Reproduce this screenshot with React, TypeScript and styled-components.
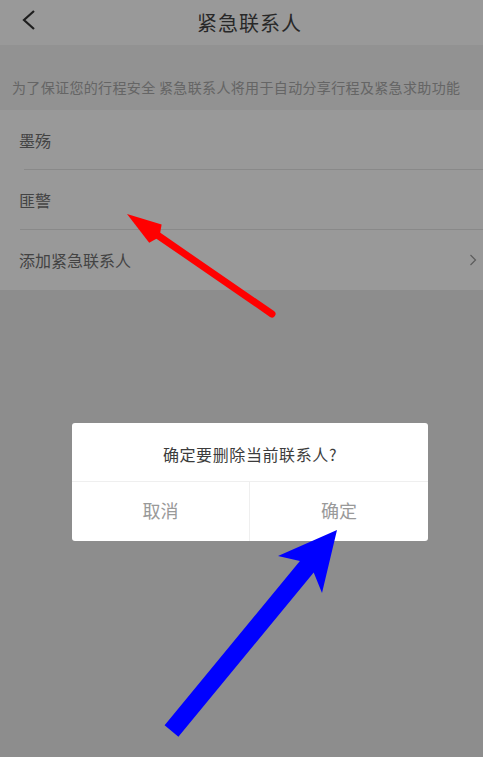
import styled, { createGlobalStyle } from 'styled-components';

const GlobalStyle = createGlobalStyle`
  html, body {
    margin: 0;
    padding: 0;
  }
  body {
    font-family: "Noto Sans CJK SC", "Noto Sans", sans-serif;
    background: #ececec;
  }
`;

const Page = styled.div`
  position: relative;
  width: 483px;
  height: 757px;
  overflow: hidden;
  background: #ececec;
`;

const Header = styled.div`
  height: 45px;
  background: #fff;
  display: flex;
  align-items: center;
  justify-content: center;
  padding-left: 16px;
  box-sizing: border-box;
  position: relative;
`;

const BackButton = styled.div`
  position: absolute;
  left: 19px;
  top: 8px;
  width: 22px;
  height: 26px;
`;

const Title = styled.h1`
  margin: 0;
  font-size: 20px;
  font-weight: 400;
  color: #444;
  letter-spacing: 1px;
`;

const Notice = styled.p`
  margin: 0;
  height: 65px;
  box-sizing: border-box;
  padding: 32px 0 0 12px;
  font-size: 14px;
  line-height: 20px;
  letter-spacing: 0.35px;
  color: #a8a8a8;
  background: #f3f3f3;
  white-space: nowrap;
`;

const List = styled.div`
  background: #fff;
`;

const Row = styled.div<{ $inset: number; $last?: boolean }>`
  height: 60px;
  display: flex;
  align-items: center;
  justify-content: space-between;
  padding: 0 6px 0 19px;
  font-size: 16px;
  color: #707070;
  position: relative;
  box-sizing: border-box;

  &::after {
    content: '';
    display: ${(p) => (p.$last ? 'none' : 'block')};
    position: absolute;
    left: ${(p) => p.$inset}px;
    right: 0;
    bottom: 0;
    height: 1px;
    background: #e4e4e4;
  }
`;

const Overlay = styled.div`
  position: absolute;
  inset: 0;
  background: rgba(0, 0, 0, 0.4);
  padding: 423px 0 0 72px;
  box-sizing: border-box;
`;

const Dialog = styled.div`
  width: 356px;
  background: #fff;
  border-radius: 3px;
  overflow: hidden;
`;

const DialogTitle = styled.div`
  height: 59px;
  display: flex;
  align-items: center;
  justify-content: center;
  padding-top: 3px;
  box-sizing: border-box;
  font-size: 16px;
  color: #3c3c3c;
  border-bottom: 1px solid #efefef;
  letter-spacing: 0.6px;
`;

const ButtonRow = styled.div`
  display: grid;
  grid-template-columns: 177px 1fr;
  height: 59px;
`;

const DialogButton = styled.div<{ $divider?: boolean }>`
  display: flex;
  align-items: center;
  justify-content: center;
  padding-bottom: 3px;
  font-size: 18px;
  color: #999;
  border-left: ${(p) => (p.$divider ? '1px solid #efefef' : 'none')};
`;

const Annotations = styled.svg`
  position: absolute;
  left: 0;
  top: 0;
  pointer-events: none;
`;

export default function App() {
  return (
    <>
      <GlobalStyle />
      <Page>
        <Header>
          <BackButton>
            <svg width="22" height="26" viewBox="0 0 22 26">
              <polyline
                points="15,3 5,12 15,21"
                fill="none"
                stroke="#333"
                strokeWidth="2.2"
              />
            </svg>
          </BackButton>
          <Title>紧急联系人</Title>
        </Header>
        <Notice>为了保证您的行程安全 紧急联系人将用于自动分享行程及紧急求助功能</Notice>
        <List>
          <Row $inset={24}>墨殇</Row>
          <Row $inset={20}>匪警</Row>
          <Row $inset={0} $last>
            添加紧急联系人
            <svg width="8" height="12" viewBox="0 0 8 12">
              <polyline points="1.5,1 6.5,6 1.5,11" fill="none" stroke="#9a9a9a" strokeWidth="1.2" />
            </svg>
          </Row>
        </List>
        <Overlay>
          <Dialog>
            <DialogTitle>确定要删除当前联系人?</DialogTitle>
            <ButtonRow>
              <DialogButton>取消</DialogButton>
              <DialogButton $divider>确定</DialogButton>
            </ButtonRow>
          </Dialog>
        </Overlay>
        <Annotations width="483" height="757" viewBox="0 0 483 757">
          {/* red arrow */}
          <line
            x1="272"
            y1="314"
            x2="158"
            y2="235.5"
            stroke="#ff0000"
            strokeWidth="7"
            strokeLinecap="round"
          />
          <polygon points="127,214 161.6,224.5 159.5,237 149.2,242.7" fill="#ff0000" />
          {/* blue arrow */}
          <polygon
            points="164.6,725.3 299.9,561 278,556 337,530 322,593 313.7,572.4 178.4,736.7"
            fill="#0000ff"
          />
        </Annotations>
      </Page>
    </>
  );
}
